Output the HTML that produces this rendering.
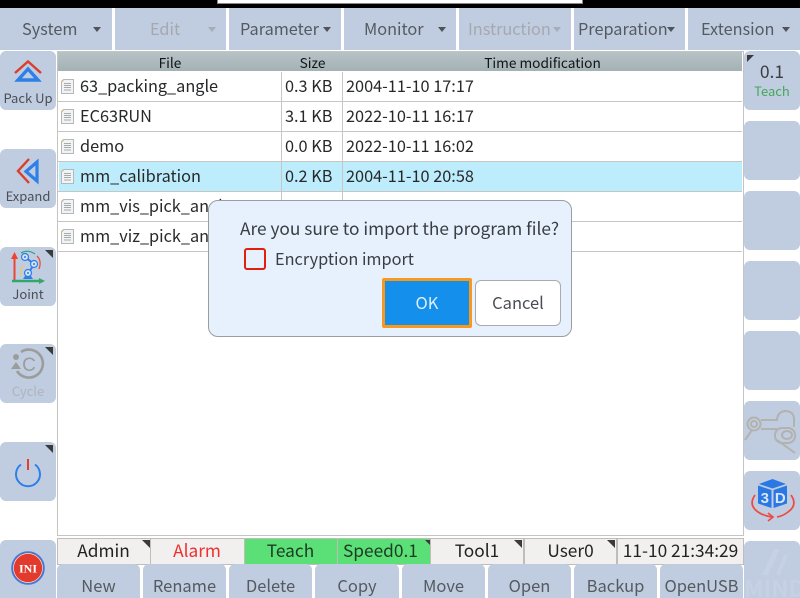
<!DOCTYPE html>
<html><head><meta charset="utf-8">
<style>
html,body{margin:0;padding:0;background:#fff}
#r{position:relative;width:800px;height:598px;overflow:hidden;background:#fff;font-family:"Liberation Sans","Noto Sans CJK SC",sans-serif}
#r,#r *{font-family:"Noto Sans CJK SC","Liberation Sans",sans-serif}
.a{position:absolute;box-sizing:border-box}
.m{position:absolute;top:8px;height:42px;background:#c0cce0;color:#555a60;font-size:16.3px;line-height:41px;white-space:nowrap}
.m span{position:absolute;top:0}
.m i{position:absolute;top:19px;width:0;height:0;border-left:4.5px solid transparent;border-right:4.5px solid transparent;border-top:5px solid #50545a}
.d{color:#a5a9ae}.d i{border-top-color:#a5adb8}
.b{position:absolute;width:56px;background:#c0cce0;border-radius:6px;text-align:center;color:#4a4f55;font-size:13px}
.c{position:absolute;right:3px;top:3px;width:0;height:0;border-top:8px solid #3a3a3a;border-left:8px solid transparent}
.t{position:absolute;font-size:16.3px;color:#26282a;white-space:nowrap;line-height:20px}
.h{position:absolute;top:52px;height:19px;background:linear-gradient(#b7c2c6,#a4b1b5);color:#111415;font-size:13.7px;line-height:20px;text-align:center;border-right:1px solid #8e9a9e}
.s{position:absolute;top:538px;height:25px;background:#f1f0ee;border:1px solid #c0bdb8;font-size:17.3px;line-height:22px;text-align:center;color:#222;white-space:nowrap}
.g{background:#5be077;}
.u{position:absolute;top:564px;height:34px;background:#c0cce0;border-radius:6px 6px 0 0;color:#555a60;font-size:16.5px;line-height:42px;text-align:center}
.l{position:absolute;left:58px;width:684px;height:1px;background:#c6c6c4}
.v{position:absolute;width:1px;top:72px;height:180px;background:#c6c6c4}
</style></head><body><div id="r">
<div class="a" style="left:0;top:0;width:800px;height:8px;background:#000"></div>
<div class="a" style="left:217px;top:0;width:366px;height:4px;background:#fff;border:1px solid #888;border-top:0"></div>

<div class="m" style="left:0;width:112px"><span style="left:22px">System</span><i style="left:93px"></i></div>
<div class="m d" style="left:115px;width:111px"><span style="left:35px">Edit</span><i style="left:93px"></i></div>
<div class="m" style="left:229px;width:112px"><span style="left:11px">Parameter</span><i style="left:94px"></i></div>
<div class="m" style="left:344px;width:112px"><span style="left:20px">Monitor</span><i style="left:94px"></i></div>
<div class="m d" style="left:459px;width:112px"><span style="left:9px">Instruction</span><i style="left:94px"></i></div>
<div class="m" style="left:574px;width:111px"><span style="left:4px">Preparation</span><i style="left:93px"></i></div>
<div class="m" style="left:688px;width:112px"><span style="left:13px">Extension</span><i style="left:94px"></i></div>

<!-- table frame -->
<div class="a" style="left:57px;top:51px;width:687px;height:485px;border:1px solid #c4c4c2;background:#fff"></div>
<div class="h" style="left:58px;width:224px">File</div>
<div class="h" style="left:282px;width:61px">Size</div>
<div class="h" style="left:343px;width:399px;border-right:0">Time modification</div>

<div class="a" style="left:59px;top:162px;width:683px;height:29px;background:#bdecfd"></div>
<div class="l" style="top:101px"></div><div class="l" style="top:131px"></div><div class="l" style="top:161px"></div><div class="l" style="top:191px"></div><div class="l" style="top:221px"></div><div class="l" style="top:251px"></div>
<div class="v" style="left:281px"></div><div class="v" style="left:342px"></div>

<svg class="a" style="left:60px;top:77px" width="16" height="180" viewBox="0 0 16 180">
<defs><g id="f"><path d="M3.5 2.500H13.500V16.500H1.500V4.500Z" fill="#f2f4f4" stroke="#b4b8ba"/><path d="M1.500 4.500L3.500 2.500V4.500Z" fill="#e8b060"/><path d="M4 6.500H11M4 8.500H11M4 10.500H11M4 13H11" stroke="#a4aaae"/></g></defs>
<use href="#f"/><use href="#f" y="30"/><use href="#f" y="60"/><use href="#f" y="90"/><use href="#f" y="120"/><use href="#f" y="150"/>
</svg>

<div class="t" style="left:80px;top:75px">63_packing_angle</div>
<div class="t" style="left:80px;top:105px">EC63RUN</div>
<div class="t" style="left:80px;top:135px">demo</div>
<div class="t" style="left:80px;top:165px">mm_calibration</div>
<div class="t" style="left:80px;top:195px">mm_vis_pick_angle</div>
<div class="t" style="left:80px;top:225px">mm_viz_pick_angle</div>
<div class="t" style="left:285px;top:75px">0.3 KB</div>
<div class="t" style="left:285px;top:105px">3.1 KB</div>
<div class="t" style="left:285px;top:135px">0.0 KB</div>
<div class="t" style="left:285px;top:165px">0.2 KB</div>
<div class="t" style="left:285px;top:195px">0.1 KB</div>
<div class="t" style="left:285px;top:225px">0.1 KB</div>
<div class="t" style="left:346px;top:75px">2004-11-10 17:17</div>
<div class="t" style="left:346px;top:105px">2022-10-11 16:17</div>
<div class="t" style="left:346px;top:135px">2022-10-11 16:02</div>
<div class="t" style="left:346px;top:165px">2004-11-10 20:58</div>
<div class="t" style="left:346px;top:195px">2004-11-15 09:00</div>
<div class="t" style="left:346px;top:225px">2004-11-15 09:02</div>

<!-- left buttons -->
<div class="b" style="left:0;top:51px;height:59px"><svg class="a" style="left:13px;top:8px" width="30" height="28" viewBox="0 0 30 28"><path d="M2 14L15 2.500L28 14" fill="none" stroke="#d8402c" stroke-width="2.400"/><path d="M15 10L25 21H5Z" fill="none" stroke="#2f7fe8" stroke-width="3.400"/></svg><div class="a" style="left:0;width:56px;top:38px;line-height:18px">Pack Up</div></div>
<div class="b" style="left:0;top:149px;height:59px"><svg class="a" style="left:15px;top:7px" width="28" height="30" viewBox="0 0 28 30"><path d="M14 3L3 15L14 27" fill="none" stroke="#d8402c" stroke-width="2.400"/><path d="M22 6V25L11 15.500Z" fill="none" stroke="#2f7fe8" stroke-width="3.200"/></svg><div class="a" style="left:0;width:56px;top:38px;line-height:18px">Expand</div></div>
<div class="b" style="left:0;top:247px;height:59px"><i class="c"></i><svg class="a" style="left:10px;top:3px" width="36" height="36" viewBox="0 0 36 36">
<path d="M4.500 31V6" stroke="#ee4433" stroke-width="2"/><path d="M4.500 2L8 9H1Z" fill="#ee4433"/>
<path d="M2 31H32" stroke="#2fa868" stroke-width="2.400"/><path d="M35 31L29 28V34Z" fill="#2fa868"/>
<path d="M18 24L24 14L15 7" fill="none" stroke="#2f7fe8" stroke-width="2"/>
<path d="M13 29H23L21 26H15Z" fill="#2f7fe8"/>
<g fill="#d4e2f2" stroke="#2f7fe8" stroke-width="1.200"><circle cx="18" cy="23" r="3.500"/><circle cx="24" cy="14" r="3.500"/><circle cx="15" cy="7" r="3.500"/></g>
<g fill="#2f7fe8"><circle cx="18" cy="23" r="1"/><circle cx="24" cy="14" r="1"/><circle cx="15" cy="7" r="1"/></g>
<path d="M27 6Q32 11 29 19" fill="none" stroke="#e85040" stroke-width="1.300"/><path d="M14 15Q9 19 11 26" fill="none" stroke="#e8c868" stroke-width="1.300"/><path d="M11 3Q18 -1 25 4" fill="none" stroke="#30a880" stroke-width="1.300"/>
</svg><div class="a" style="left:0;width:56px;top:38px;line-height:18px">Joint</div></div>
<div class="b" style="left:0;top:344px;height:59px;color:#adb4bd"><i class="c"></i><svg class="a" style="left:10px;top:4px" width="38" height="34" viewBox="0 0 38 34"><path d="M11 4A14 14 0 1 1 7 23" fill="none" stroke="#9c9c9a" stroke-width="2.600"/><path d="M6 14L11 21H1Z" fill="#9c9c9a"/><circle cx="6" cy="9" r="3" fill="#9c9c9a"/><text x="19" y="23" text-anchor="middle" font-size="19" fill="#9c9c9a" style="font-family:'Liberation Sans',sans-serif">C</text></svg><div class="a" style="left:0;width:56px;top:38px;line-height:18px">Cycle</div></div>
<div class="b" style="left:0;top:442px;height:59px"><i class="c"></i><svg class="a" style="left:13px;top:13px" width="30" height="34" viewBox="0 0 30 34"><path d="M8 9.500A12 12 0 1 0 22 9.500" fill="none" stroke="#2f7fe8" stroke-width="2"/><path d="M15 4V15" stroke="#e04030" stroke-width="2"/></svg></div>
<div class="b" style="left:0;top:540px;height:58px;border-radius:6px 6px 0 0"><svg class="a" style="left:11px;top:11px" width="34" height="34" viewBox="0 0 34 34"><circle cx="17" cy="17" r="16" fill="#e23a2c" stroke="#2f7fe8" stroke-width="1.600"/><circle cx="17" cy="17" r="14.500" fill="#e23a2c" stroke="#f2e4e0" stroke-width=".7"/><text x="17" y="21.500" text-anchor="middle" font-size="12" font-weight="700" fill="#fff" style="font-family:'Liberation Serif',serif">INI</text></svg></div>

<!-- right buttons -->
<div class="b" style="left:744px;top:51px;height:59px"><div class="a" style="left:3px;top:4px;width:0;height:0;border-top:7px solid #3a3a3a;border-right:7px solid transparent"></div><div class="a" style="left:0;width:56px;top:10px;font-size:17.500px;line-height:22px;color:#3a3e42">0.1</div><div class="a" style="left:0;width:56px;top:31px;line-height:18px;color:#45a85a">Teach</div></div>
<div class="b" style="left:744px;top:121px;height:59px"></div>
<div class="b" style="left:744px;top:191px;height:59px"></div>
<div class="b" style="left:744px;top:261px;height:59px"></div>
<div class="b" style="left:744px;top:331px;height:59px"></div>
<div class="b" style="left:744px;top:401px;height:59px"><svg class="a" style="left:0;top:8px" width="56" height="46" viewBox="0 0 56 46"><g fill="none" stroke="#b2b2ae" stroke-width="2"><path d="M1 31L8 21"/><circle cx="10" cy="15" r="6.500"/><circle cx="10" cy="15" r="3"/><path d="M17 11H33M17 20H33"/><path d="M33 12Q33 3 41 2Q49 2 50 9V18"/><rect x="31" y="19" width="20" height="15" rx="7"/><ellipse cx="43" cy="26" rx="5" ry="4"/><path d="M33 31L51 44"/></g></svg></div>
<div class="b" style="left:744px;top:471px;height:59px"><svg class="a" style="left:6px;top:8px" width="46" height="44" viewBox="0 0 46 44"><path d="M22.500 0L36 5L22.500 9.500L9 5Z" fill="#2a78e4"/><path d="M8 6.500L21.500 11V29L8 24.500Z" fill="#2a78e4"/><path d="M37 6.500L23.500 11V29L37 24.500Z" fill="#2a78e4"/><text x="14.800" y="24" text-anchor="middle" font-size="15" font-weight="700" fill="#d8e6f8" style="font-family:'Liberation Sans',sans-serif">3</text><text x="30.300" y="24" text-anchor="middle" font-size="15" font-weight="700" fill="#d8e6f8" style="font-family:'Liberation Sans',sans-serif">D</text><path d="M5 16Q-2 26 8 33Q14 37 22 38" fill="none" stroke="#ee4a44" stroke-width="1.700"/><path d="M18 34L23 38L18 42" fill="none" stroke="#ee4a44" stroke-width="1.700"/><path d="M41 16Q48 26 38 33Q33 37 27 38" fill="none" stroke="#ee4a44" stroke-width="1.700"/></svg></div>
<div class="b" style="left:744px;top:541px;height:57px;border-radius:6px 6px 0 0"></div>

<!-- status -->
<div class="s" style="left:57px;width:91px;padding-right:2px">Admin<i class="c" style="right:1px;top:1px"></i></div>
<div class="s" style="left:150px;width:92px;color:#f03030;padding-right:2px">Alarm</div>
<div class="s g" style="left:244px;width:91px;color:#1d3a24;padding-right:2px">Teach</div>
<div class="s g" style="left:337px;width:91px;color:#1d3a24;text-align:left;padding-left:5px">Speed0.1<i class="c" style="right:1px;top:1px"></i></div>
<div class="s" style="left:430px;width:92px">Tool1<i class="c" style="right:1px;top:1px"></i></div>
<div class="s" style="left:524px;width:91px">User0<i class="c" style="right:1px;top:1px"></i></div>
<div class="s" style="left:617px;width:125px">11-10 21:34:29</div>

<div class="u" style="left:57px;width:83px">New</div>
<div class="u" style="left:143px;width:83px">Rename</div>
<div class="u" style="left:229px;width:83px">Delete</div>
<div class="u" style="left:315px;width:84px">Copy</div>
<div class="u" style="left:402px;width:83px">Move</div>
<div class="u" style="left:488px;width:83px">Open</div>
<div class="u" style="left:574px;width:83px">Backup</div>
<div class="u" style="left:660px;width:83px">OpenUSB</div>

<!-- watermark -->
<div class="a" style="left:744px;top:574px;font-size:23px;font-weight:700;line-height:26px;color:#c6d1e3;white-space:nowrap;width:56px;overflow:hidden;letter-spacing:0">MIND</div>
<svg class="a" style="left:744px;top:541px" width="56" height="36" viewBox="0 0 56 36"><path d="M18 34L30 8H36L24 34ZM32 34L40 14H44L36 34Z" fill="#c6d1e3"/></svg>

<!-- dialog -->
<div class="a" style="left:208px;top:200px;width:364px;height:137px;background:#e6f1fd;border:1px solid #9a9ea3;border-radius:10px"></div>
<div class="t" style="left:240px;top:217px;color:#3a3e44;line-height:22px;font-size:17.300px">Are you sure to import the program file?</div>
<div class="a" style="left:244px;top:248px;width:22px;height:22px;border:2px solid #e0200c;border-radius:3px"></div>
<div class="t" style="left:275px;top:247px;color:#3a3e44;line-height:22px">Encryption import</div>
<div class="a" style="left:382px;top:278px;width:90px;height:50px;background:#1490ec;border:3px solid #f8981c;border-radius:2px;color:#dfeefc;font-size:16.500px;line-height:42px;text-align:center">OK</div>
<div class="a" style="left:475px;top:280px;width:86px;height:46px;background:#fff;border:1px solid #a8acb0;border-radius:6px;color:#4a4e54;font-size:16.500px;line-height:42px;text-align:center">Cancel</div>
</div></body></html>
